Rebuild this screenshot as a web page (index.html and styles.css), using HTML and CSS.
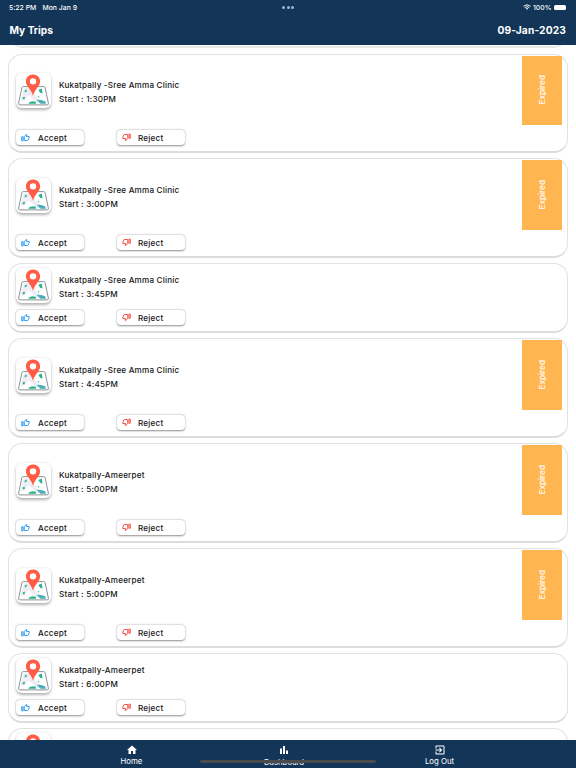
FILE: index.html
```html
<!DOCTYPE html>
<html lang="en">
<head>
    <meta charset="UTF-8">
    <meta name="viewport" content="width=device-width, initial-scale=1.0">
    <title>My Trips</title>
    <link rel="stylesheet" href="styles.css">
</head>
<body>

    <!-- shared icons -->
    <svg class="icon-defs">
        <symbol id="map" viewBox="0 0 36 36">
            <path d="M7.4 14 H28.6 Q29.6 14 29.9 15 L33.3 31 Q33.7 32.8 32 32.8 H4 Q2.3 32.8 2.7 31 L6.1 15 Q6.4 14 7.4 14 Z" fill="#fff" stroke="#8a8d8f" stroke-width="1"/>
            <path d="M8 16 L14 15 L22 26 L31 31 H22 L13 23 L7 29 L5 28 Z" fill="#efedf3"/>
            <path d="M9 18 l2 -1 v2 l-2 1z M23 17.500 l3.500 -1.500 .8 5 l-2.500 -.6z M7 25 l2 -.6 v2.600 h-2z M13 30.500 l3.500 -1.500 4 .5 v2 h-7.500z M22 24 h2 l-.5 1.500z" fill="#27b38c"/>
            <path d="M21 27.500 l5 .2 4 1.300 .8 2.600 h-5.500z" fill="#4aaebd"/>
            <path d="M17.500 1.500 C13.200 1.500 10.200 4.700 10.200 8.600 C10.200 13.700 15.500 16.500 17.500 23.500 C19.500 16.500 24.800 13.700 24.800 8.600 C24.800 4.700 21.800 1.500 17.500 1.500 Z" fill="#ff5b45"/>
            <circle cx="17.500" cy="8.600" r="3.300" fill="#fff"/>
        </symbol>
        <symbol id="thumb" viewBox="0 0 24 24">
            <path d="M2 10 h3.500 v11 h-3.500z M9 20 h8.500 c1 0 1.500-.5 1.800-1.300 l2.600-6 V9.500 h-7.300 l1-5 L14.500 3.400 L8.600 9.800 V19 c0 .6.200 1 .4 1z" fill="none" stroke="currentColor" stroke-width="2.500" stroke-linejoin="round"/>
        </symbol>
    </svg>

    <div class="statusbar">
        <div class="time"><span>5:22 PM</span><span>Mon Jan 9</span></div>
        <div class="dots"><i></i><i></i><i></i></div>
        <div class="power">
            <svg class="wifi" viewBox="0 0 16 12">
                <path d="M1 4.500 Q8 -1.500 15 4.500 M3.600 7.200 Q8 3.400 12.400 7.200" fill="none" stroke="#fff" stroke-width="1.900"/>
                <path d="M5.500 9 Q8 7 10.500 9 L8 11.600 Z" fill="#fff"/>
            </svg>
            <span>100%</span>
            <span class="battery"></span>
        </div>
    </div>

    <div class="header">
        <h1>My Trips</h1>
        <div class="date">09-Jan-2023</div>
    </div>

    <div class="trips">
        <div class="card previous"></div>

        <div class="card">
            <div class="trip">
                <div class="map"><svg><use href="#map"/></svg></div>
                <div class="info"><p>Kukatpally -Sree Amma Clinic</p><p>Start : 1:30PM</p></div>
                <div class="expired"><span>Expired</span></div>
            </div>
            <div class="actions">
                <button class="accept"><svg><use href="#thumb"/></svg><span>Accept</span></button>
                <button class="reject"><svg><use href="#thumb"/></svg><span>Reject</span></button>
            </div>
        </div>

        <div class="card">
            <div class="trip">
                <div class="map"><svg><use href="#map"/></svg></div>
                <div class="info"><p>Kukatpally -Sree Amma Clinic</p><p>Start : 3:00PM</p></div>
                <div class="expired"><span>Expired</span></div>
            </div>
            <div class="actions">
                <button class="accept"><svg><use href="#thumb"/></svg><span>Accept</span></button>
                <button class="reject"><svg><use href="#thumb"/></svg><span>Reject</span></button>
            </div>
        </div>

        <div class="card">
            <div class="trip">
                <div class="map"><svg><use href="#map"/></svg></div>
                <div class="info"><p>Kukatpally -Sree Amma Clinic</p><p>Start : 3:45PM</p></div>
            </div>
            <div class="actions">
                <button class="accept"><svg><use href="#thumb"/></svg><span>Accept</span></button>
                <button class="reject"><svg><use href="#thumb"/></svg><span>Reject</span></button>
            </div>
        </div>

        <div class="card">
            <div class="trip">
                <div class="map"><svg><use href="#map"/></svg></div>
                <div class="info"><p>Kukatpally -Sree Amma Clinic</p><p>Start : 4:45PM</p></div>
                <div class="expired"><span>Expired</span></div>
            </div>
            <div class="actions">
                <button class="accept"><svg><use href="#thumb"/></svg><span>Accept</span></button>
                <button class="reject"><svg><use href="#thumb"/></svg><span>Reject</span></button>
            </div>
        </div>

        <div class="card">
            <div class="trip">
                <div class="map"><svg><use href="#map"/></svg></div>
                <div class="info"><p>Kukatpally-Ameerpet</p><p>Start : 5:00PM</p></div>
                <div class="expired"><span>Expired</span></div>
            </div>
            <div class="actions">
                <button class="accept"><svg><use href="#thumb"/></svg><span>Accept</span></button>
                <button class="reject"><svg><use href="#thumb"/></svg><span>Reject</span></button>
            </div>
        </div>

        <div class="card">
            <div class="trip">
                <div class="map"><svg><use href="#map"/></svg></div>
                <div class="info"><p>Kukatpally-Ameerpet</p><p>Start : 5:00PM</p></div>
                <div class="expired"><span>Expired</span></div>
            </div>
            <div class="actions">
                <button class="accept"><svg><use href="#thumb"/></svg><span>Accept</span></button>
                <button class="reject"><svg><use href="#thumb"/></svg><span>Reject</span></button>
            </div>
        </div>

        <div class="card">
            <div class="trip">
                <div class="map"><svg><use href="#map"/></svg></div>
                <div class="info"><p>Kukatpally-Ameerpet</p><p>Start : 6:00PM</p></div>
            </div>
            <div class="actions">
                <button class="accept"><svg><use href="#thumb"/></svg><span>Accept</span></button>
                <button class="reject"><svg><use href="#thumb"/></svg><span>Reject</span></button>
            </div>
        </div>

        <div class="card">
            <div class="trip">
                <div class="map"><svg><use href="#map"/></svg></div>
            </div>
        </div>
    </div>

    <div class="tabs">
        <div class="tab">
            <svg viewBox="0 0 24 24"><path d="M10 20v-6h4v6h5v-8h3L12 3 2 12h3v8z"/></svg>
            <span>Home</span>
        </div>
        <div class="tab active">
            <svg viewBox="0 0 24 24"><path d="M4 9h4v11H4z M10 4h4v16h-4z M16 13h4v7h-4z"/></svg>
            <span>Dashboard</span>
        </div>
        <div class="tab">
            <svg viewBox="0 0 24 24"><path d="M10.100 15.600L11.500 17l5-5-5-5-1.400 1.400L12.700 11H3v2h9.700l-2.600 2.600zM19 3H5c-1.100 0-2 .9-2 2v4h2V5h14v14H5v-4H3v4c0 1.100.9 2 2 2h14c1.100 0 2-.9 2-2V5c0-1.100-.9-2-2-2z"/></svg>
            <span>Log Out</span>
        </div>
        <div class="home-bar"></div>
    </div>

</body>
</html>
```
FILE: styles.css
```css
body {
    font-family: Inter, "Liberation Sans", sans-serif;
    margin: 0;
    height: 768px;
    display: flex;
    flex-direction: column;
    overflow: hidden;
    background-color: #fff;
    color: #151515;
}

.icon-defs {
    display: none;
}

.statusbar {
    display: grid;
    grid-template-columns: 1fr auto 1fr;
    align-items: center;
    height: 14px;
    padding: 0 9px;
    background-color: #133658;
    color: #fff;
    font-size: 6.800px;
    font-weight: 500;
    letter-spacing: 0.05px;
}

.time {
    display: flex;
    gap: 6px;
}

.dots {
    display: flex;
    gap: 1.5px;
}

.dots i {
    width: 3px;
    height: 3px;
    border-radius: 50%;
    background-color: #9db4cf;
}

.power {
    display: flex;
    justify-content: flex-end;
    align-items: center;
    gap: 2px;
}

.wifi {
    width: 8px;
    height: 6px;
}

.battery {
    width: 12px;
    height: 5px;
    margin-right: 1.500px;
    border-radius: 1.5px;
    background-color: #fff;
}

.header {
    display: flex;
    justify-content: space-between;
    align-items: center;
    height: 31px;
    padding: 0 10px 0 9.5px;
    background-color: #133658;
    color: #fff;
}

h1, .date {
    margin: 0;
    font-size: 10.200px;
    font-weight: 700;
    line-height: 32px;
}

.date {
    letter-spacing: 0.15px;
}

.trips {
    flex: 1;
    min-height: 0;
    overflow: hidden;
    padding: 0 8px;
}

.card {
    box-sizing: border-box;
    margin-bottom: 5.2px;
    padding: 1px 5px 5.9px 7px;
    border: 1px solid #e2e2e2;
    border-bottom: 2px solid #dcdcdc;
    border-radius: 14px;
    background-color: #fff;
}

.previous {
    height: 30px;
    margin-top: -26.700px;
    border-color: #e8e8e8;
}

.trip {
    display: flex;
    align-items: center;
    min-height: 39.300px;
}

.map {
    width: 35px;
    height: 35px;
    margin-top: 1px;
    border-radius: 6px;
    background-color: #fff;
    box-shadow: 0 1.5px 3px rgba(0, 0, 0, 0.3);
}

.map svg {
    display: block;
    width: 35px;
    height: 35px;
}

.info {
    flex: 1;
    margin-left: 8px;
    padding-top: 4px;
}

.info p {
    margin: 0;
    font-size: 8.100px;
    font-weight: 500;
    line-height: 14px;
    letter-spacing: 0.2px;
}

.info p + p {
    letter-spacing: 0.22px;
}

.expired {
    display: flex;
    justify-content: center;
    align-items: center;
    width: 40px;
    height: 69.200px;
    background-color: #ffb550;
    color: #fff;
    font-size: 8.200px;
    font-weight: 500;
}

.expired span {
    writing-mode: vertical-rl;
    transform: rotate(180deg);
}

.actions {
    display: flex;
    gap: 33px;
    margin-top: 5.700px;
}

button {
    display: flex;
    align-items: center;
    width: 68px;
    height: 15px;
    padding: 0 5px;
    border: none;
    border-radius: 4px;
    background-color: #fff;
    box-shadow: 0 0.5px 2px rgba(0, 0, 0, 0.45);
    color: #151515;
    font-family: inherit;
    font-size: 8.100px;
    font-weight: 500;
    letter-spacing: 0.22px;
}

button svg {
    width: 9px;
    height: 9px;
}

button span {
    margin-left: 8px;
}

.accept svg {
    color: #2196f3;
}

.reject svg {
    color: #f44336;
    transform: rotate(180deg);
}

.reject span {
    margin-left: 7px;
}

.tabs {
    position: relative;
    display: flex;
    justify-content: space-between;
    height: 28.500px;
    padding: 0 82px 0 77px;
    background-color: #133658;
    color: #fff;
}

.tab {
    display: flex;
    flex-direction: column;
    align-items: center;
    width: 109px;
    padding-top: 4px;
    font-size: 7.800px;
    line-height: 10px;
}

.tab svg {
    width: 12px;
    height: 12px;
    fill: #fff;
}

.active {
    margin-right: 3px;
    line-height: 12px;
}

.home-bar {
    position: absolute;
    left: 200px;
    bottom: 5px;
    width: 176px;
    height: 3px;
    border-radius: 2px;
    background-color: #4b4b4d;
}
```
